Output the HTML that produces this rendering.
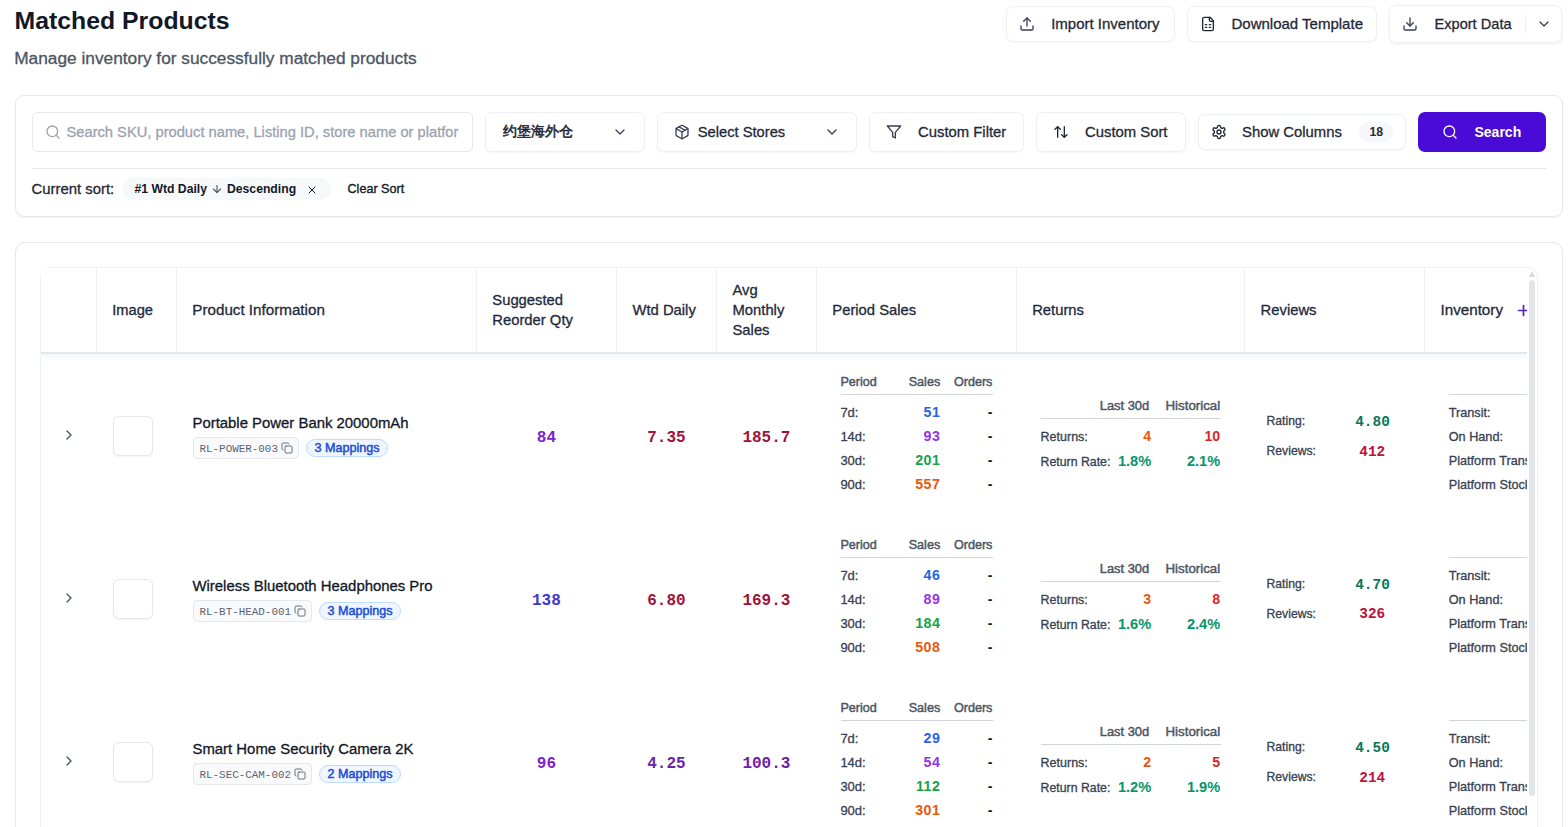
<!DOCTYPE html>
<html><head><meta charset="utf-8">
<style>
*{box-sizing:border-box;margin:0;padding:0}
html,body{width:1568px;height:827px;overflow:hidden;background:#fff}
body{position:relative;font-family:"Liberation Sans",sans-serif;color:#1f2937}
.abs{position:absolute}
svg{display:block}
.t{position:absolute;white-space:nowrap;line-height:1;-webkit-text-stroke:0.3px currentColor}
.b{-webkit-text-stroke:0}
.btn{position:absolute;border:1px solid #edf0f4;border-radius:7px;background:#fff;box-shadow:0 1px 2px rgba(16,24,40,.04)}
.ic{position:absolute;overflow:visible}
</style></head><body>
<div class="t" style="left:14.60px;top:9.00px;font-size:24.8px;font-weight:700;-webkit-text-stroke:0;color:#111827;">Matched Products</div>
<div class="t" style="left:14.20px;top:50.00px;font-size:17.3px;color:#4b5563;">Manage inventory for successfully matched products</div>
<div class="btn" style="left:1006px;top:6px;width:169px;height:36px"></div>
<div class="btn" style="left:1187px;top:6px;width:190px;height:36px"></div>
<div class="btn" style="left:1389px;top:5px;width:173px;height:38px;box-shadow:0 1px 3px rgba(16,24,40,.08)"></div>
<svg class="ic" style="left:1019px;top:15.5px" width="16" height="16" viewBox="0 0 24 24" fill="none" stroke="#374151" stroke-width="2" stroke-linecap="round" stroke-linejoin="round"><path d="M21 15v4a2 2 0 0 1-2 2H5a2 2 0 0 1-2-2v-4"/><polyline points="17 8 12 3 7 8"/><line x1="12" y1="3" x2="12" y2="15"/></svg>
<div class="t" style="left:1051.20px;top:16.00px;font-size:15.0px;color:#1f2937;">Import Inventory</div>
<svg class="ic" style="left:1200px;top:16px" width="16" height="16" viewBox="0 0 24 24" fill="none" stroke="#1f2937" stroke-width="2" stroke-linecap="round" stroke-linejoin="round"><path d="M15 2H6a2 2 0 0 0-2 2v16a2 2 0 0 0 2 2h12a2 2 0 0 0 2-2V7Z"/><path d="M14 2v4a2 2 0 0 0 2 2h4"/><path d="M8 13h2"/><path d="M14 13h2"/><path d="M8 17h2"/><path d="M14 17h2"/></svg>
<div class="t" style="left:1231.50px;top:16.00px;font-size:15.0px;color:#1f2937;">Download Template</div>
<svg class="ic" style="left:1402px;top:16px" width="16" height="16" viewBox="0 0 24 24" fill="none" stroke="#374151" stroke-width="2" stroke-linecap="round" stroke-linejoin="round"><path d="M21 15v4a2 2 0 0 1-2 2H5a2 2 0 0 1-2-2v-4"/><polyline points="7 10 12 15 17 10"/><line x1="12" y1="15" x2="12" y2="3"/></svg>
<div class="t" style="left:1434.50px;top:17.00px;font-size:14.6px;color:#1f2937;">Export Data</div>
<div class="abs" style="left:1525px;top:14px;width:1px;height:20px;background:#eef0f3"></div>
<svg class="ic" style="left:1536px;top:16px" width="16" height="16" viewBox="0 0 24 24" fill="none" stroke="#374151" stroke-width="2" stroke-linecap="round" stroke-linejoin="round"><path d="m6 9 6 6 6-6"/></svg>
<div class="abs" style="left:15px;top:95px;width:1548px;height:122px;border:1px solid #e5e7eb;border-radius:9px;box-shadow:0 1px 2px rgba(16,24,40,.05)"></div>
<div class="abs" style="left:32px;top:112px;width:441px;height:40px;border:1px solid #e5e7eb;border-radius:6px"></div>
<svg class="ic" style="left:45px;top:124px" width="16" height="16" viewBox="0 0 24 24" fill="none" stroke="#9ca3af" stroke-width="2" stroke-linecap="round" stroke-linejoin="round"><circle cx="11" cy="11" r="8"/><path d="m21 21-4.3-4.3"/></svg>
<div class="t" style="left:66.50px;top:125.00px;font-size:14.7px;color:#9ca3af;">Search SKU, product name, Listing ID, store name or platfor</div>
<div class="btn" style="left:485px;top:112px;width:160px;height:40px"></div>
<div class="t" style="left:502.50px;top:124.00px;font-size:14px;color:#1f2937;-webkit-text-stroke:0.55px #1f2937;">约堡海外仓</div>
<svg class="ic" style="left:612px;top:124px" width="16" height="16" viewBox="0 0 24 24" fill="none" stroke="#374151" stroke-width="2" stroke-linecap="round" stroke-linejoin="round"><path d="m6 9 6 6 6-6"/></svg>
<div class="btn" style="left:657px;top:112px;width:200px;height:40px"></div>
<svg class="ic" style="left:674px;top:123.5px" width="16" height="16" viewBox="0 0 24 24" fill="none" stroke="#374151" stroke-width="2" stroke-linecap="round" stroke-linejoin="round"><path d="m7.5 4.27 9 5.15"/><path d="M21 8a2 2 0 0 0-1-1.73l-7-4a2 2 0 0 0-2 0l-7 4A2 2 0 0 0 3 8v8a2 2 0 0 0 1 1.73l7 4a2 2 0 0 0 2 0l7-4A2 2 0 0 0 21 16Z"/><path d="m3.3 7 8.7 5 8.7-5"/><path d="M12 22V12"/></svg>
<div class="t" style="left:697.80px;top:125.00px;font-size:14.7px;color:#1f2937;">Select Stores</div>
<svg class="ic" style="left:824px;top:124px" width="16" height="16" viewBox="0 0 24 24" fill="none" stroke="#374151" stroke-width="2" stroke-linecap="round" stroke-linejoin="round"><path d="m6 9 6 6 6-6"/></svg>
<div class="btn" style="left:869px;top:112px;width:155px;height:40px"></div>
<svg class="ic" style="left:886px;top:123.5px" width="16" height="16" viewBox="0 0 24 24" fill="none" stroke="#374151" stroke-width="2" stroke-linecap="round" stroke-linejoin="round"><polygon points="22 3 2 3 10 12.46 10 19 14 21 14 12.46 22 3"/></svg>
<div class="t" style="left:918.00px;top:125.00px;font-size:14.85px;color:#1f2937;">Custom Filter</div>
<div class="btn" style="left:1036px;top:112px;width:150px;height:40px"></div>
<svg class="ic" style="left:1052.5px;top:123.5px" width="16" height="16" viewBox="0 0 24 24" fill="none" stroke="#1f2937" stroke-width="2" stroke-linecap="round" stroke-linejoin="round"><path d="m21 16-4 4-4-4"/><path d="M17 20V4"/><path d="m3 8 4-4 4 4"/><path d="M7 4v16"/></svg>
<div class="t" style="left:1085.00px;top:125.00px;font-size:14.85px;color:#1f2937;">Custom Sort</div>
<div class="btn" style="left:1198px;top:114px;width:208px;height:36px"></div>
<svg class="ic" style="left:1211px;top:124px" width="16" height="16" viewBox="0 0 24 24" fill="none" stroke="#1f2937" stroke-width="2" stroke-linecap="round" stroke-linejoin="round"><path d="M12.22 2h-.44a2 2 0 0 0-2 2v.18a2 2 0 0 1-1 1.73l-.43.25a2 2 0 0 1-2 0l-.15-.08a2 2 0 0 0-2.73.73l-.22.38a2 2 0 0 0 .73 2.730l.15.1a2 2 0 0 1 1 1.72v.51a2 2 0 0 1-1 1.74l-.15.09a2 2 0 0 0-.73 2.73l.22.38a2 2 0 0 0 2.73.73l.15-.08a2 2 0 0 1 2 0l.43.25a2 2 0 0 1 1 1.73V20a2 2 0 0 0 2 2h.44a2 2 0 0 0 2-2v-.18a2 2 0 0 1 1-1.73l.43-.25a2 2 0 0 1 2 0l.15.08a2 2 0 0 0 2.73-.73l.22-.39a2 2 0 0 0-.73-2.73l-.15-.08a2 2 0 0 1-1-1.74v-.5a2 2 0 0 1 1-1.74l.15-.09a2 2 0 0 0 .73-2.73l-.22-.38a2 2 0 0 0-2.73-.73l-.15.08a2 2 0 0 1-2 0l-.43-.25a2 2 0 0 1-1-1.73V4a2 2 0 0 0-2-2z"/><circle cx="12" cy="12" r="3"/></svg>
<div class="t" style="left:1242.00px;top:125.00px;font-size:14.85px;color:#1f2937;">Show Columns</div>
<div class="abs" style="left:1359px;top:121px;width:34px;height:22px;background:#f6f7f9;border-radius:11px"></div>
<div class="t" style="left:1176.20px;width:400px;top:126.00px;font-size:12.2px;font-weight:700;-webkit-text-stroke:0;color:#1f2937;text-align:center">18</div>
<div class="abs" style="left:1418px;top:112px;width:128px;height:40px;background:#4a0bd6;border-radius:7px"></div>
<svg class="ic" style="left:1442px;top:124px" width="16" height="16" viewBox="0 0 24 24" fill="none" stroke="#ffffff" stroke-width="2" stroke-linecap="round" stroke-linejoin="round"><circle cx="11" cy="11" r="8"/><path d="m21 21-4.3-4.3"/></svg>
<div class="t" style="left:1474.50px;top:125.00px;font-size:14px;font-weight:700;-webkit-text-stroke:0;color:#ffffff;">Search</div>
<div class="abs" style="left:32px;top:168px;width:1514px;height:1px;background:#e5e7eb"></div>
<div class="t" style="left:31.50px;top:182.00px;font-size:14.9px;color:#1f2937;">Current sort:</div>
<div class="abs" style="left:123px;top:178px;width:208px;height:22px;background:#f7f8fa;border-radius:11px"></div>
<div class="t" style="left:134.50px;top:183.00px;font-size:12.2px;font-weight:700;-webkit-text-stroke:0;color:#111827;">#1 Wtd Daily</div>
<svg class="ic" style="left:210.8px;top:182.5px" width="12" height="12" viewBox="0 0 24 24" fill="none" stroke="#4b5563" stroke-width="2.2" stroke-linecap="round" stroke-linejoin="round"><path d="M12 5v14"/><path d="m19 12-7 7-7-7"/></svg>
<div class="t" style="left:227.00px;top:183.00px;font-size:12.2px;font-weight:700;-webkit-text-stroke:0;color:#111827;">Descending</div>
<svg class="ic" style="left:306px;top:183.5px" width="12" height="12" viewBox="0 0 24 24" fill="none" stroke="#111827" stroke-width="2" stroke-linecap="round" stroke-linejoin="round"><path d="M18 6 6 18"/><path d="m6 6 12 12"/></svg>
<div class="t" style="left:347.50px;top:183.00px;font-size:12.6px;color:#111827;-webkit-text-stroke:0.35px #111827;">Clear Sort</div>
<div class="abs" style="left:15px;top:242px;width:1548px;height:620px;border:1px solid #e5e7eb;border-radius:10px"></div>
<div class="abs" style="left:40px;top:267px;width:1498px;height:600px;border:1px solid #eef1f6;border-radius:10px"></div>
<div class="abs" style="left:0;top:0;width:1568px;height:827px;clip-path:inset(268px 41px 0px 41px)">
<div class="abs" style="left:41px;top:268px;width:1486px;height:84px;background:#ffffff"></div>
<div class="abs" style="left:41px;top:352px;width:1486px;height:2px;background:#e2e7ef;box-shadow:0 3px 4px rgba(15,23,42,.07)"></div>
<div class="abs" style="left:96px;top:268px;width:1px;height:84px;background:#f1f1f3;box-shadow:0 0 1.5px #f3f3f5"></div>
<div class="abs" style="left:176px;top:268px;width:1px;height:84px;background:#f1f1f3;box-shadow:0 0 1.5px #f3f3f5"></div>
<div class="abs" style="left:476px;top:268px;width:1px;height:84px;background:#f1f1f3;box-shadow:0 0 1.5px #f3f3f5"></div>
<div class="abs" style="left:616px;top:268px;width:1px;height:84px;background:#f1f1f3;box-shadow:0 0 1.5px #f3f3f5"></div>
<div class="abs" style="left:716px;top:268px;width:1px;height:84px;background:#f1f1f3;box-shadow:0 0 1.5px #f3f3f5"></div>
<div class="abs" style="left:816px;top:268px;width:1px;height:84px;background:#f1f1f3;box-shadow:0 0 1.5px #f3f3f5"></div>
<div class="abs" style="left:1016px;top:268px;width:1px;height:84px;background:#f1f1f3;box-shadow:0 0 1.5px #f3f3f5"></div>
<div class="abs" style="left:1244px;top:268px;width:1px;height:84px;background:#f1f1f3;box-shadow:0 0 1.5px #f3f3f5"></div>
<div class="abs" style="left:1424px;top:268px;width:1px;height:84px;background:#f1f1f3;box-shadow:0 0 1.5px #f3f3f5"></div>
<div class="t" style="left:112.30px;top:303.00px;font-size:14.65px;color:#1e293b;">Image</div>
<div class="t" style="left:192.30px;top:302.00px;font-size:15.2px;color:#1e293b;">Product Information</div>
<div class="t" style="left:492.30px;top:293.00px;font-size:14.8px;color:#1e293b;">Suggested</div>
<div class="t" style="left:492.30px;top:313.00px;font-size:14.8px;color:#1e293b;">Reorder Qty</div>
<div class="t" style="left:632.50px;top:303.00px;font-size:14.8px;color:#1e293b;">Wtd Daily</div>
<div class="t" style="left:732.50px;top:283.00px;font-size:14.8px;color:#1e293b;">Avg</div>
<div class="t" style="left:732.50px;top:303.00px;font-size:14.8px;color:#1e293b;">Monthly</div>
<div class="t" style="left:732.50px;top:323.00px;font-size:14.8px;color:#1e293b;">Sales</div>
<div class="t" style="left:832.30px;top:303.00px;font-size:14.8px;color:#1e293b;">Period Sales</div>
<div class="t" style="left:1032.20px;top:303.00px;font-size:14.8px;color:#1e293b;">Returns</div>
<div class="t" style="left:1260.60px;top:303.00px;font-size:14.8px;color:#1e293b;">Reviews</div>
<div class="t" style="left:1440.50px;top:302.00px;font-size:15.2px;color:#1e293b;">Inventory</div>
<svg class="ic" style="left:1514.5px;top:301.5px" width="17" height="17" viewBox="0 0 24 24" fill="none" stroke="#5521d0" stroke-width="2.4" stroke-linecap="round" stroke-linejoin="round"><path d="M5 12h14"/><path d="M12 5v14"/></svg>
<svg class="ic" style="left:61px;top:427px" width="16" height="16" viewBox="0 0 24 24" fill="none" stroke="#4b5563" stroke-width="2" stroke-linecap="round" stroke-linejoin="round"><path d="m9 18 6-6-6-6"/></svg>
<div class="abs" style="left:113px;top:416px;width:40px;height:40px;border:1px solid #e5e7eb;border-radius:6px;background:#fff;box-shadow:0 1px 2px rgba(0,0,0,.05)"></div>
<div class="t" style="left:192.50px;top:416.00px;font-size:14.9px;color:#111827;">Portable Power Bank 20000mAh</div>
<div class="abs" style="left:193px;top:437px;width:106px;height:22px;border:1px solid #e5e7eb;border-radius:4px;background:#f9fafb"></div>
<div class="t" style="left:199.50px;top:444.00px;font-size:10.9px;color:#5b6270;font-family:'Liberation Mono',monospace;-webkit-text-stroke:0;">RL-POWER-003</div>
<svg class="ic" style="left:281px;top:441.5px" width="12" height="12" viewBox="0 0 24 24" fill="none" stroke="#6b7280" stroke-width="2" stroke-linecap="round" stroke-linejoin="round"><rect x="8" y="8" width="14" height="14" rx="2" ry="2"/><path d="M4 16c-1.1 0-2-.9-2-2V4c0-1.1.9-2 2-2h10c1.1 0 2 .9 2 2"/></svg>
<div class="abs" style="left:306px;top:439px;width:82px;height:18px;border:1px solid #bfdbfe;border-radius:9px;background:#eff6ff"></div>
<div class="t" style="left:147.00px;width:400px;top:442.00px;font-size:12.6px;color:#1d4ed8;-webkit-text-stroke:0.5px #1d4ed8;text-align:center">3 Mappings</div>
<div class="t" style="left:346.40px;width:400px;top:430.00px;font-size:16px;font-weight:700;-webkit-text-stroke:0;color:#7e22ce;font-family:'Liberation Mono',monospace;text-align:center">84</div>
<div class="t" style="left:466.40px;width:400px;top:430.00px;font-size:16px;font-weight:700;-webkit-text-stroke:0;color:#9f1239;font-family:'Liberation Mono',monospace;text-align:center">7.35</div>
<div class="t" style="left:566.40px;width:400px;top:430.00px;font-size:16px;font-weight:700;-webkit-text-stroke:0;color:#9f1239;font-family:'Liberation Mono',monospace;text-align:center">185.7</div>
<div class="t" style="left:840.40px;top:376.00px;font-size:12.6px;color:#4b5563;-webkit-text-stroke:0.45px #4b5563;">Period</div>
<div class="t" style="right:627.80px;top:376.00px;font-size:12.6px;color:#4b5563;-webkit-text-stroke:0.45px #4b5563;text-align:right">Sales</div>
<div class="t" style="right:575.60px;top:376.00px;font-size:12.6px;color:#4b5563;-webkit-text-stroke:0.45px #4b5563;text-align:right">Orders</div>
<div class="abs" style="left:841px;top:394px;width:152px;height:1px;background:#d1d5db"></div>
<div class="t" style="left:840.40px;top:406.00px;font-size:13px;color:#374151;">7d:</div>
<div class="t" style="right:627.80px;top:405.00px;font-size:14.2px;font-weight:700;-webkit-text-stroke:0;color:#2563eb;letter-spacing:0.4px;text-align:right">51</div>
<div class="t" style="right:575.60px;top:405.00px;font-size:14px;font-weight:700;-webkit-text-stroke:0;color:#111827;text-align:right">-</div>
<div class="t" style="left:840.40px;top:430.00px;font-size:13px;color:#374151;">14d:</div>
<div class="t" style="right:627.80px;top:429.00px;font-size:14.2px;font-weight:700;-webkit-text-stroke:0;color:#9333ea;letter-spacing:0.4px;text-align:right">93</div>
<div class="t" style="right:575.60px;top:429.00px;font-size:14px;font-weight:700;-webkit-text-stroke:0;color:#111827;text-align:right">-</div>
<div class="t" style="left:840.40px;top:454.00px;font-size:13px;color:#374151;">30d:</div>
<div class="t" style="right:627.80px;top:453.00px;font-size:14.2px;font-weight:700;-webkit-text-stroke:0;color:#16a34a;letter-spacing:0.4px;text-align:right">201</div>
<div class="t" style="right:575.60px;top:453.00px;font-size:14px;font-weight:700;-webkit-text-stroke:0;color:#111827;text-align:right">-</div>
<div class="t" style="left:840.40px;top:478.00px;font-size:13px;color:#374151;">90d:</div>
<div class="t" style="right:627.80px;top:477.00px;font-size:14.2px;font-weight:700;-webkit-text-stroke:0;color:#ea580c;letter-spacing:0.4px;text-align:right">557</div>
<div class="t" style="right:575.60px;top:477.00px;font-size:14px;font-weight:700;-webkit-text-stroke:0;color:#111827;text-align:right">-</div>
<div class="t" style="right:418.80px;top:400.00px;font-size:12.9px;color:#4b5563;-webkit-text-stroke:0.45px #4b5563;text-align:right">Last 30d</div>
<div class="t" style="right:347.80px;top:399.00px;font-size:13.3px;color:#4b5563;-webkit-text-stroke:0.45px #4b5563;text-align:right">Historical</div>
<div class="abs" style="left:1041px;top:418px;width:180px;height:1px;background:#d1d5db"></div>
<div class="t" style="left:1040.60px;top:431.00px;font-size:12.5px;color:#374151;">Returns:</div>
<div class="t" style="right:416.80px;top:429.00px;font-size:14.2px;font-weight:700;-webkit-text-stroke:0;color:#ea580c;text-align:right">4</div>
<div class="t" style="right:347.80px;top:429.00px;font-size:14.2px;font-weight:700;-webkit-text-stroke:0;color:#dc2626;text-align:right">10</div>
<div class="t" style="left:1040.60px;top:456.00px;font-size:12.3px;color:#374151;">Return Rate:</div>
<div class="t" style="right:416.80px;top:454.00px;font-size:14.6px;font-weight:700;-webkit-text-stroke:0;color:#059669;text-align:right">1.8%</div>
<div class="t" style="right:347.80px;top:454.00px;font-size:14.6px;font-weight:700;-webkit-text-stroke:0;color:#059669;text-align:right">2.1%</div>
<div class="t" style="left:1266.50px;top:415.00px;font-size:12.2px;color:#374151;">Rating:</div>
<div class="t" style="left:1172.50px;width:400px;top:415.00px;font-size:14.4px;font-weight:700;-webkit-text-stroke:0;color:#047857;font-family:'Liberation Mono',monospace;text-align:center">4.80</div>
<div class="t" style="left:1266.50px;top:445.00px;font-size:12.2px;color:#374151;">Reviews:</div>
<div class="t" style="left:1172.30px;width:400px;top:445.00px;font-size:14.4px;font-weight:700;-webkit-text-stroke:0;color:#be123c;font-family:'Liberation Mono',monospace;text-align:center">412</div>
<div class="abs" style="left:1449px;top:394px;width:120px;height:1px;background:#d1d5db"></div>
<div class="t" style="left:1448.70px;top:407.00px;font-size:12.7px;color:#374151;">Transit:</div>
<div class="t" style="left:1448.70px;top:431.00px;font-size:12.7px;color:#374151;">On Hand:</div>
<div class="t" style="left:1448.70px;top:455.00px;font-size:12.7px;color:#374151;">Platform Transit:</div>
<div class="t" style="left:1448.70px;top:479.00px;font-size:12.7px;color:#374151;">Platform Stock:</div>
<svg class="ic" style="left:61px;top:590px" width="16" height="16" viewBox="0 0 24 24" fill="none" stroke="#4b5563" stroke-width="2" stroke-linecap="round" stroke-linejoin="round"><path d="m9 18 6-6-6-6"/></svg>
<div class="abs" style="left:113px;top:579px;width:40px;height:40px;border:1px solid #e5e7eb;border-radius:6px;background:#fff;box-shadow:0 1px 2px rgba(0,0,0,.05)"></div>
<div class="t" style="left:192.50px;top:579.00px;font-size:14.9px;color:#111827;">Wireless Bluetooth Headphones Pro</div>
<div class="abs" style="left:193px;top:600px;width:119px;height:22px;border:1px solid #e5e7eb;border-radius:4px;background:#f9fafb"></div>
<div class="t" style="left:199.50px;top:607.00px;font-size:10.9px;color:#5b6270;font-family:'Liberation Mono',monospace;-webkit-text-stroke:0;">RL-BT-HEAD-001</div>
<svg class="ic" style="left:294px;top:604.5px" width="12" height="12" viewBox="0 0 24 24" fill="none" stroke="#6b7280" stroke-width="2" stroke-linecap="round" stroke-linejoin="round"><rect x="8" y="8" width="14" height="14" rx="2" ry="2"/><path d="M4 16c-1.1 0-2-.9-2-2V4c0-1.1.9-2 2-2h10c1.1 0 2 .9 2 2"/></svg>
<div class="abs" style="left:319px;top:602px;width:82px;height:18px;border:1px solid #bfdbfe;border-radius:9px;background:#eff6ff"></div>
<div class="t" style="left:160.00px;width:400px;top:605.00px;font-size:12.6px;color:#1d4ed8;-webkit-text-stroke:0.5px #1d4ed8;text-align:center">3 Mappings</div>
<div class="t" style="left:346.40px;width:400px;top:593.00px;font-size:16px;font-weight:700;-webkit-text-stroke:0;color:#4338ca;font-family:'Liberation Mono',monospace;text-align:center">138</div>
<div class="t" style="left:466.40px;width:400px;top:593.00px;font-size:16px;font-weight:700;-webkit-text-stroke:0;color:#9f1239;font-family:'Liberation Mono',monospace;text-align:center">6.80</div>
<div class="t" style="left:566.40px;width:400px;top:593.00px;font-size:16px;font-weight:700;-webkit-text-stroke:0;color:#9f1239;font-family:'Liberation Mono',monospace;text-align:center">169.3</div>
<div class="t" style="left:840.40px;top:539.00px;font-size:12.6px;color:#4b5563;-webkit-text-stroke:0.45px #4b5563;">Period</div>
<div class="t" style="right:627.80px;top:539.00px;font-size:12.6px;color:#4b5563;-webkit-text-stroke:0.45px #4b5563;text-align:right">Sales</div>
<div class="t" style="right:575.60px;top:539.00px;font-size:12.6px;color:#4b5563;-webkit-text-stroke:0.45px #4b5563;text-align:right">Orders</div>
<div class="abs" style="left:841px;top:557px;width:152px;height:1px;background:#d1d5db"></div>
<div class="t" style="left:840.40px;top:569.00px;font-size:13px;color:#374151;">7d:</div>
<div class="t" style="right:627.80px;top:568.00px;font-size:14.2px;font-weight:700;-webkit-text-stroke:0;color:#2563eb;letter-spacing:0.4px;text-align:right">46</div>
<div class="t" style="right:575.60px;top:568.00px;font-size:14px;font-weight:700;-webkit-text-stroke:0;color:#111827;text-align:right">-</div>
<div class="t" style="left:840.40px;top:593.00px;font-size:13px;color:#374151;">14d:</div>
<div class="t" style="right:627.80px;top:592.00px;font-size:14.2px;font-weight:700;-webkit-text-stroke:0;color:#9333ea;letter-spacing:0.4px;text-align:right">89</div>
<div class="t" style="right:575.60px;top:592.00px;font-size:14px;font-weight:700;-webkit-text-stroke:0;color:#111827;text-align:right">-</div>
<div class="t" style="left:840.40px;top:617.00px;font-size:13px;color:#374151;">30d:</div>
<div class="t" style="right:627.80px;top:616.00px;font-size:14.2px;font-weight:700;-webkit-text-stroke:0;color:#16a34a;letter-spacing:0.4px;text-align:right">184</div>
<div class="t" style="right:575.60px;top:616.00px;font-size:14px;font-weight:700;-webkit-text-stroke:0;color:#111827;text-align:right">-</div>
<div class="t" style="left:840.40px;top:641.00px;font-size:13px;color:#374151;">90d:</div>
<div class="t" style="right:627.80px;top:640.00px;font-size:14.2px;font-weight:700;-webkit-text-stroke:0;color:#ea580c;letter-spacing:0.4px;text-align:right">508</div>
<div class="t" style="right:575.60px;top:640.00px;font-size:14px;font-weight:700;-webkit-text-stroke:0;color:#111827;text-align:right">-</div>
<div class="t" style="right:418.80px;top:563.00px;font-size:12.9px;color:#4b5563;-webkit-text-stroke:0.45px #4b5563;text-align:right">Last 30d</div>
<div class="t" style="right:347.80px;top:562.00px;font-size:13.3px;color:#4b5563;-webkit-text-stroke:0.45px #4b5563;text-align:right">Historical</div>
<div class="abs" style="left:1041px;top:581px;width:180px;height:1px;background:#d1d5db"></div>
<div class="t" style="left:1040.60px;top:594.00px;font-size:12.5px;color:#374151;">Returns:</div>
<div class="t" style="right:416.80px;top:592.00px;font-size:14.2px;font-weight:700;-webkit-text-stroke:0;color:#ea580c;text-align:right">3</div>
<div class="t" style="right:347.80px;top:592.00px;font-size:14.2px;font-weight:700;-webkit-text-stroke:0;color:#dc2626;text-align:right">8</div>
<div class="t" style="left:1040.60px;top:619.00px;font-size:12.3px;color:#374151;">Return Rate:</div>
<div class="t" style="right:416.80px;top:617.00px;font-size:14.6px;font-weight:700;-webkit-text-stroke:0;color:#059669;text-align:right">1.6%</div>
<div class="t" style="right:347.80px;top:617.00px;font-size:14.6px;font-weight:700;-webkit-text-stroke:0;color:#059669;text-align:right">2.4%</div>
<div class="t" style="left:1266.50px;top:578.00px;font-size:12.2px;color:#374151;">Rating:</div>
<div class="t" style="left:1172.50px;width:400px;top:578.00px;font-size:14.4px;font-weight:700;-webkit-text-stroke:0;color:#047857;font-family:'Liberation Mono',monospace;text-align:center">4.70</div>
<div class="t" style="left:1266.50px;top:608.00px;font-size:12.2px;color:#374151;">Reviews:</div>
<div class="t" style="left:1172.30px;width:400px;top:607.00px;font-size:14.4px;font-weight:700;-webkit-text-stroke:0;color:#be123c;font-family:'Liberation Mono',monospace;text-align:center">326</div>
<div class="abs" style="left:1449px;top:557px;width:120px;height:1px;background:#d1d5db"></div>
<div class="t" style="left:1448.70px;top:570.00px;font-size:12.7px;color:#374151;">Transit:</div>
<div class="t" style="left:1448.70px;top:594.00px;font-size:12.7px;color:#374151;">On Hand:</div>
<div class="t" style="left:1448.70px;top:618.00px;font-size:12.7px;color:#374151;">Platform Transit:</div>
<div class="t" style="left:1448.70px;top:642.00px;font-size:12.7px;color:#374151;">Platform Stock:</div>
<svg class="ic" style="left:61px;top:753px" width="16" height="16" viewBox="0 0 24 24" fill="none" stroke="#4b5563" stroke-width="2" stroke-linecap="round" stroke-linejoin="round"><path d="m9 18 6-6-6-6"/></svg>
<div class="abs" style="left:113px;top:742px;width:40px;height:40px;border:1px solid #e5e7eb;border-radius:6px;background:#fff;box-shadow:0 1px 2px rgba(0,0,0,.05)"></div>
<div class="t" style="left:192.50px;top:742.00px;font-size:14.9px;color:#111827;">Smart Home Security Camera 2K</div>
<div class="abs" style="left:193px;top:763px;width:119px;height:22px;border:1px solid #e5e7eb;border-radius:4px;background:#f9fafb"></div>
<div class="t" style="left:199.50px;top:770.00px;font-size:10.9px;color:#5b6270;font-family:'Liberation Mono',monospace;-webkit-text-stroke:0;">RL-SEC-CAM-002</div>
<svg class="ic" style="left:294px;top:767.5px" width="12" height="12" viewBox="0 0 24 24" fill="none" stroke="#6b7280" stroke-width="2" stroke-linecap="round" stroke-linejoin="round"><rect x="8" y="8" width="14" height="14" rx="2" ry="2"/><path d="M4 16c-1.1 0-2-.9-2-2V4c0-1.1.9-2 2-2h10c1.1 0 2 .9 2 2"/></svg>
<div class="abs" style="left:319px;top:765px;width:82px;height:18px;border:1px solid #bfdbfe;border-radius:9px;background:#eff6ff"></div>
<div class="t" style="left:160.00px;width:400px;top:768.00px;font-size:12.6px;color:#1d4ed8;-webkit-text-stroke:0.5px #1d4ed8;text-align:center">2 Mappings</div>
<div class="t" style="left:346.40px;width:400px;top:756.00px;font-size:16px;font-weight:700;-webkit-text-stroke:0;color:#7e22ce;font-family:'Liberation Mono',monospace;text-align:center">96</div>
<div class="t" style="left:466.40px;width:400px;top:756.00px;font-size:16px;font-weight:700;-webkit-text-stroke:0;color:#6b21a8;font-family:'Liberation Mono',monospace;text-align:center">4.25</div>
<div class="t" style="left:566.40px;width:400px;top:756.00px;font-size:16px;font-weight:700;-webkit-text-stroke:0;color:#6b21a8;font-family:'Liberation Mono',monospace;text-align:center">100.3</div>
<div class="t" style="left:840.40px;top:702.00px;font-size:12.6px;color:#4b5563;-webkit-text-stroke:0.45px #4b5563;">Period</div>
<div class="t" style="right:627.80px;top:702.00px;font-size:12.6px;color:#4b5563;-webkit-text-stroke:0.45px #4b5563;text-align:right">Sales</div>
<div class="t" style="right:575.60px;top:702.00px;font-size:12.6px;color:#4b5563;-webkit-text-stroke:0.45px #4b5563;text-align:right">Orders</div>
<div class="abs" style="left:841px;top:720px;width:152px;height:1px;background:#d1d5db"></div>
<div class="t" style="left:840.40px;top:732.00px;font-size:13px;color:#374151;">7d:</div>
<div class="t" style="right:627.80px;top:731.00px;font-size:14.2px;font-weight:700;-webkit-text-stroke:0;color:#2563eb;letter-spacing:0.4px;text-align:right">29</div>
<div class="t" style="right:575.60px;top:731.00px;font-size:14px;font-weight:700;-webkit-text-stroke:0;color:#111827;text-align:right">-</div>
<div class="t" style="left:840.40px;top:756.00px;font-size:13px;color:#374151;">14d:</div>
<div class="t" style="right:627.80px;top:755.00px;font-size:14.2px;font-weight:700;-webkit-text-stroke:0;color:#9333ea;letter-spacing:0.4px;text-align:right">54</div>
<div class="t" style="right:575.60px;top:755.00px;font-size:14px;font-weight:700;-webkit-text-stroke:0;color:#111827;text-align:right">-</div>
<div class="t" style="left:840.40px;top:780.00px;font-size:13px;color:#374151;">30d:</div>
<div class="t" style="right:627.80px;top:779.00px;font-size:14.2px;font-weight:700;-webkit-text-stroke:0;color:#16a34a;letter-spacing:0.4px;text-align:right">112</div>
<div class="t" style="right:575.60px;top:779.00px;font-size:14px;font-weight:700;-webkit-text-stroke:0;color:#111827;text-align:right">-</div>
<div class="t" style="left:840.40px;top:804.00px;font-size:13px;color:#374151;">90d:</div>
<div class="t" style="right:627.80px;top:803.00px;font-size:14.2px;font-weight:700;-webkit-text-stroke:0;color:#ea580c;letter-spacing:0.4px;text-align:right">301</div>
<div class="t" style="right:575.60px;top:803.00px;font-size:14px;font-weight:700;-webkit-text-stroke:0;color:#111827;text-align:right">-</div>
<div class="t" style="right:418.80px;top:726.00px;font-size:12.9px;color:#4b5563;-webkit-text-stroke:0.45px #4b5563;text-align:right">Last 30d</div>
<div class="t" style="right:347.80px;top:725.00px;font-size:13.3px;color:#4b5563;-webkit-text-stroke:0.45px #4b5563;text-align:right">Historical</div>
<div class="abs" style="left:1041px;top:744px;width:180px;height:1px;background:#d1d5db"></div>
<div class="t" style="left:1040.60px;top:757.00px;font-size:12.5px;color:#374151;">Returns:</div>
<div class="t" style="right:416.80px;top:755.00px;font-size:14.2px;font-weight:700;-webkit-text-stroke:0;color:#ea580c;text-align:right">2</div>
<div class="t" style="right:347.80px;top:755.00px;font-size:14.2px;font-weight:700;-webkit-text-stroke:0;color:#dc2626;text-align:right">5</div>
<div class="t" style="left:1040.60px;top:782.00px;font-size:12.3px;color:#374151;">Return Rate:</div>
<div class="t" style="right:416.80px;top:780.00px;font-size:14.6px;font-weight:700;-webkit-text-stroke:0;color:#059669;text-align:right">1.2%</div>
<div class="t" style="right:347.80px;top:780.00px;font-size:14.6px;font-weight:700;-webkit-text-stroke:0;color:#059669;text-align:right">1.9%</div>
<div class="t" style="left:1266.50px;top:741.00px;font-size:12.2px;color:#374151;">Rating:</div>
<div class="t" style="left:1172.50px;width:400px;top:741.00px;font-size:14.4px;font-weight:700;-webkit-text-stroke:0;color:#047857;font-family:'Liberation Mono',monospace;text-align:center">4.50</div>
<div class="t" style="left:1266.50px;top:771.00px;font-size:12.2px;color:#374151;">Reviews:</div>
<div class="t" style="left:1172.30px;width:400px;top:771.00px;font-size:14.4px;font-weight:700;-webkit-text-stroke:0;color:#be123c;font-family:'Liberation Mono',monospace;text-align:center">214</div>
<div class="abs" style="left:1449px;top:720px;width:120px;height:1px;background:#d1d5db"></div>
<div class="t" style="left:1448.70px;top:733.00px;font-size:12.7px;color:#374151;">Transit:</div>
<div class="t" style="left:1448.70px;top:757.00px;font-size:12.7px;color:#374151;">On Hand:</div>
<div class="t" style="left:1448.70px;top:781.00px;font-size:12.7px;color:#374151;">Platform Transit:</div>
<div class="t" style="left:1448.70px;top:805.00px;font-size:12.7px;color:#374151;">Platform Stock:</div>
</div>
<div class="abs" style="left:1529px;top:271px;width:6px;height:6px;clip-path:polygon(50% 0,100% 100%,0 100%);background:#d8dbe0"></div>
<div class="abs" style="left:1529px;top:280px;width:6px;height:516px;background:#e3e5e9;border-radius:3px"></div>

</body></html>
